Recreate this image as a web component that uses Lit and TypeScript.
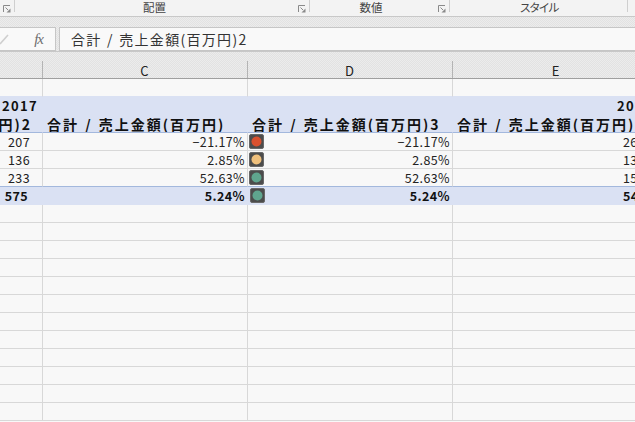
import { LitElement, html, css } from "lit";
import { customElement } from "lit/decorators.js";

const launcher = html`<svg class="launch" width="8" height="8" viewBox="0 0 8 8">
  <path d="M0.5 7V0.5H7" fill="none" stroke="#8a8a8a"/>
  <path d="M2.5 2.5L5 5" stroke="#8a8a8a" fill="none"/>
  <path d="M3.5 7.5H7.5V3.5Z" fill="#8a8a8a"/>
</svg>`;

const light = (c: string) => html`<svg class="light" width="15" height="15" viewBox="0 0 15 15">
  <rect x="0.5" y="0.5" width="14" height="14" rx="1.5" fill="#4c4c4c" stroke="#686868"/>
  <circle cx="7.5" cy="7.5" r="5" fill="${c}"/>
</svg>`;

const RED = "#d9502e";
const YEL = "#efc07c";
const GRN = "#5fa58e";
const HEAD = "合計 / 売上金額(百万円)";

const data: [string, string, string][] = [
  ["207", "−21.17%", RED],
  ["136", "2.85%", YEL],
  ["233", "52.63%", GRN],
];
const eVals = ["26", "13", "15"];

@customElement("app-root")
export class AppRoot extends LitElement {
  static styles = css`
    :host {
      display: block;
      width: 635px;
      height: 422px;
      overflow: hidden;
      background: #f8f8f8;
      font-family: "Noto Sans CJK JP", "Liberation Sans", sans-serif;
      font-size: 12px;
      color: #222;
    }
    .ribbon {
      display: grid;
      grid-template-columns: 15px 295px 140px 178px 7px;
      height: 17px;
      background: #f3f3f3;
      border-bottom: 1px solid #c8c8c8;
      box-sizing: border-box;
      font-size: 11.5px;
      color: #444;
    }
    .group {
      position: relative;
      height: 12px;
      line-height: 15px;
      text-align: center;
      border-right: 1px solid #cfcfcf;
      box-sizing: border-box;
    }
    .pad-a {
      padding-right: 15px;
    }
    .pad-b {
      padding-right: 17px;
    }
    .kana {
      letter-spacing: -2px;
    }
    .launch {
      position: absolute;
      right: 3px;
      top: 5px;
    }
    .band {
      background-color: #e7e7e7;
      background-image: repeating-conic-gradient(#e2e2e2 0 25%, #ececec 0 50%);
      background-size: 2px 2px;
    }
    .fbar {
      display: flex;
      gap: 3px;
      height: 34px;
      padding-top: 10px;
      box-sizing: border-box;
    }
    .fleft,
    .fmain {
      height: 24px;
      background: #f9f9f9;
      border: 1px solid #c6c6c6;
      box-sizing: border-box;
    }
    .fleft {
      width: 57px;
      margin-left: -1px;
      border-left: none;
      display: flex;
      align-items: center;
      justify-content: space-between;
      padding: 0 12px 0 1px;
    }
    .fx {
      font-family: "Liberation Serif", serif;
      font-style: italic;
      font-size: 15px;
      letter-spacing: -1px;
      color: #6e6e6e;
    }
    .fmain {
      flex: 1;
      margin-right: -1px;
      padding-left: 11px;
      line-height: 22px;
      font-size: 14px;
      color: #333;
      letter-spacing: 1.3px;
      word-spacing: 1px;
      white-space: nowrap;
    }
    .colhead {
      display: grid;
      grid-template-columns: 43px 205px 205px 205px;
      height: 28px;
      border-top: 1px solid #c8c8c8;
      border-bottom: 1px solid #9f9f9f;
      box-sizing: border-box;
    }
    .colhead div {
      height: 26px;
      box-sizing: border-box;
      padding-top: 10px;
      line-height: 18px;
      font-size: 13px;
      text-align: center;
      color: #222;
      position: relative;
    }
    .colhead .shift {
      padding-right: 2px;
    }
    .colhead .tick::after {
      content: "";
      position: absolute;
      right: 0;
      top: 9px;
      bottom: 0;
      width: 1px;
      background: #b4b4b4;
    }
    .row {
      display: grid;
      grid-template-columns: 43px 205px 205px 205px;
      height: 18px;
      box-sizing: border-box;
      line-height: 17px;
      white-space: nowrap;
    }
    .row > div {
      border-right: 1px solid #d8d8d8;
      border-bottom: 1px solid #d8d8d8;
      box-sizing: border-box;
      overflow: hidden;
      position: relative;
      height: 18px;
    }
    .row.pre > div {
      border-bottom-color: #dae1f3;
    }
    .row.pre-total > div {
      border-bottom-color: #a3b8dd;
    }
    .num {
      text-align: right;
      padding-right: 2px;
      letter-spacing: 0.4px;
      font-size: 12.5px;
      line-height: 18px;
    }
    .b {
      padding-right: 12px;
    }
    .strong .b {
      padding-right: 14px;
    }
    .e {
      text-align: left;
      padding-left: 170px;
    }
    .blue > div {
      background: #dae1f3;
      border-right-color: transparent;
      border-bottom-color: transparent;
    }
    .blue.line > div {
      border-bottom-color: #a3b8dd;
    }
    .strong > div {
      font-weight: 700;
      color: #111;
    }
    .hd {
      font-size: 14px;
      font-weight: 700;
      letter-spacing: 2px;
      word-spacing: 1px;
      color: #111;
      line-height: 18px;
    }
    .hd.left {
      text-align: left;
      padding-left: 4px;
    }
    .year {
      font-size: 13px;
      font-weight: 700;
      letter-spacing: 1.3px;
      color: #111;
      text-align: right;
      line-height: 17px;
      padding-right: 4px;
    }
    .clip {
      display: flex;
      justify-content: flex-end;
      padding-right: 10px;
    }
    .light {
      position: absolute;
      left: 1px;
      top: 1px;
    }
    .strong .light {
      left: 2px;
    }
  `;

  private emptyRow(cls = "") {
    return html`<div class="row ${cls}"><div></div><div></div><div></div><div></div></div>`;
  }

  render() {
    return html`
      <div class="ribbon">
        <div class="group">${launcher}</div>
        <div class="group pad-a">配置${launcher}</div>
        <div class="group pad-b">数値${launcher}</div>
        <div class="group kana">スタイル</div>
        <div></div>
      </div>
      <div class="fbar band">
        <div class="fleft">
          <svg width="10" height="11" viewBox="0 0 10 11"><path d="M0 10L8 1" stroke="#cfcfcf" stroke-width="1.6" fill="none"/></svg>
          <span class="fx">fx</span>
        </div>
        <div class="fmain">${HEAD}2</div>
      </div>
      <div class="colhead band">
        <div class="tick"></div>
        <div class="tick shift">C</div>
        <div class="tick shift">D</div>
        <div class="tick">E</div>
      </div>
      ${this.emptyRow("pre")}
      <div class="row blue">
        <div class="year">2017</div>
        <div></div><div></div>
        <div class="year">2017</div>
      </div>
      <div class="row blue line">
        <div class="hd clip"><span>(百万円)2</span></div>
        <div class="hd left">${HEAD}</div>
        <div class="hd left">${HEAD}3</div>
        <div class="hd left">${HEAD}</div>
      </div>
      ${data.map(
        ([b, pct, c], i) => html`<div class="row ${i === 2 ? "pre-total" : ""}">
          <div class="num b">${b}</div>
          <div class="num">${pct}</div>
          <div class="num">${light(c)}${pct}</div>
          <div class="num e">${eVals[i]}</div>
        </div>`
      )}
      <div class="row blue strong">
        <div class="num b">575</div>
        <div class="num">5.24%</div>
        <div class="num">${light(GRN)}5.24%</div>
        <div class="num e">54</div>
      </div>
      ${Array.from({ length: 12 }, () => this.emptyRow())}
    `;
  }
}
